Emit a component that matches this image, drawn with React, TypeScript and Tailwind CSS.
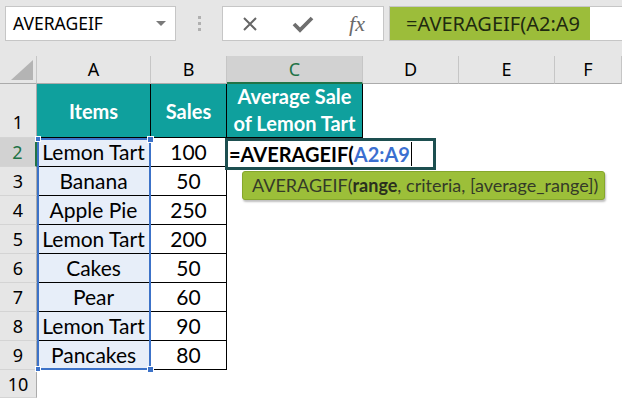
import React from "react"

const ui = { fontFamily: '"Noto Sans", "Open Sans", sans-serif' }
const cal = { fontFamily: 'Lato, "Noto Sans", sans-serif' }

const rows = [
  ["Lemon Tart", "100"],
  ["Banana", "50"],
  ["Apple Pie", "250"],
  ["Lemon Tart", "200"],
  ["Cakes", "50"],
  ["Pear", "60"],
  ["Lemon Tart", "90"],
  ["Pancakes", "80"],
]

function ColHead({ label, active }: { label: string; active?: boolean }) {
  return (
    <div
      className={
        "flex items-center justify-center border-r border-b text-[18px] " +
        (active
          ? "bg-[#d2d2d2] border-r-[#c6c6c6] border-b-2 border-b-[#217346] text-[#217346]"
          : "bg-[#e6e6e6] border-r-[#c6c6c6] border-b-[#ababab] text-black")
      }
      style={ui}
    >
      {label}
    </div>
  )
}

function RowHead({ n, active, tall }: { n: number; active?: boolean; tall?: boolean }) {
  return (
    <div
      className={
        "flex justify-center border-b border-b-[#d4d4d4] text-[18px] leading-none " +
        (tall ? "items-end pb-[6px] " : "items-center ") +
        (active
          ? "bg-[#d2d2d2] border-r-2 border-r-[#217346] text-[#217346]"
          : "bg-[#e6e6e6] border-r border-r-[#ababab] text-black")
      }
      style={ui}
    >
      {n}
    </div>
  )
}

export default function App() {
  return (
    <div className="w-[622px] h-[398px] overflow-hidden bg-white select-none">
      {/* formula bar */}
      <div className="h-[56px] bg-[#e6e6e6] flex items-start pt-[6px] pl-[5px]">
        <div
          className="w-[171px] h-[35px] bg-white border border-[#c6c6c6] flex items-center justify-between pl-[7px] pr-[9px] text-[17.5px] text-black"
          style={ui}
        >
          <span>AVERAGEIF</span>
          <svg width="10" height="6" viewBox="0 0 10 6">
            <path d="M0 0 L10 0 L5 5 Z" fill="#7a7a7a" />
          </svg>
        </div>
        <div className="w-[46px] h-[35px] flex flex-col items-center justify-center gap-[3px]">
          <span className="w-[3px] h-[3px] bg-[#b0b0b0]" />
          <span className="w-[3px] h-[3px] bg-[#b0b0b0]" />
          <span className="w-[3px] h-[3px] bg-[#b0b0b0]" />
        </div>
        <div className="w-[162px] h-[35px] bg-white border border-[#c6c6c6] flex items-center">
          <div className="w-[52px] flex justify-center pl-[2px]">
            <svg width="16" height="16" viewBox="0 0 16 16">
              <path d="M2 2 L14 14 M14 2 L2 14" stroke="#666" strokeWidth="2" />
            </svg>
          </div>
          <div className="w-[56px] flex justify-center">
            <svg width="22" height="18" viewBox="0 0 22 18">
              <path d="M2 9 L8 15 L20 3" stroke="#6e6e6e" strokeWidth="3.8" fill="none" />
            </svg>
          </div>
          <div
            className="w-[52px] flex justify-center text-[22px] italic text-[#6a6a6a] leading-none"
            style={{ fontFamily: '"Liberation Serif", "DejaVu Serif", serif' }}
          >
            fx
          </div>
        </div>
        <div className="ml-[5px] flex-1 h-[35px] bg-white border-l border-y border-[#c6c6c6] flex">
          <div
            className="w-[200px] h-full bg-[#9cbd3a] flex items-center pl-[16px] text-[20px] text-[#1f2a10]"
            style={ui}
          >
            =AVERAGEIF(A2:A9
          </div>
        </div>
      </div>

      {/* sheet */}
      <div className="relative">
        <div className="grid grid-cols-[37px_114px_76px_136px_96px_96px_1fr] grid-rows-[28px_54px_repeat(8,29px)_28px]">
          <div className="bg-[#e6e6e6] border-r border-b border-r-[#c6c6c6] border-b-[#ababab] flex items-end justify-end pr-[3px] pb-[3px]">
            <svg width="22" height="20" viewBox="0 0 22 20">
              <path d="M22 0 L22 20 L0 20 Z" fill="#b4b4b4" />
            </svg>
          </div>
          <ColHead label="A" />
          <ColHead label="B" />
          <ColHead label="C" active />
          <ColHead label="D" />
          <ColHead label="E" />
          <ColHead label="F" />

          <RowHead n={1} tall />
          <div
            className="bg-[#0fa09d] border-r border-b border-black flex items-center justify-center text-white font-bold text-[20px]"
            style={cal}
          >
            Items
          </div>
          <div
            className="bg-[#0fa09d] border-r border-b border-black flex items-center justify-center text-white font-bold text-[20px]"
            style={cal}
          >
            Sales
          </div>
          <div
            className="bg-[#0fa09d] border-r border-b border-black flex items-center justify-center text-center text-white font-bold text-[20px] leading-[27px] pb-[1px]"
            style={cal}
          >
            Average Sale
            <br />
            of Lemon Tart
          </div>
          <div />
          <div />
          <div />

          {rows.map(([item, sales], i) => (
            <React.Fragment key={i}>
              <RowHead n={i + 2} active={i === 0} />
              <div
                className="bg-[#e7eef9] border-r border-b border-black flex items-center justify-center text-[21px] text-black"
                style={cal}
              >
                {item}
              </div>
              <div
                className="border-r border-b border-black flex items-center justify-center text-[21px] text-black"
                style={cal}
              >
                {sales}
              </div>
              <div />
              <div />
              <div />
              <div />
            </React.Fragment>
          ))}

          <RowHead n={10} />
          <div />
          <div />
          <div />
          <div />
          <div />
          <div />
        </div>

        {/* selection A2:A9 */}
        <div className="absolute left-[37px] top-[82px] w-[114px] h-[232px] border-2 border-[#3c72c8] pointer-events-none" />
        <div className="absolute left-[35px] top-[80px] w-[6px] h-[6px] bg-[#3c72c8] border border-white" />
        <div className="absolute left-[147px] top-[80px] w-[7px] h-[7px] bg-[#3c72c8] border border-white" />
        <div className="absolute left-[35px] top-[310px] w-[6px] h-[6px] bg-[#3c72c8] border border-white" />
        <div className="absolute left-[147px] top-[310px] w-[7px] h-[7px] bg-[#3c72c8] border border-white" />

        {/* active cell in edit mode */}
        <div
          className="absolute left-[225px] top-[82px] w-[211px] h-[32px] bg-white border-[3px] border-[#1d4f50] flex items-center pl-[1px] text-[20px] font-bold text-black"
          style={cal}
        >
          <span>=AVERAGEIF(</span>
          <span className="text-[#3b6fd0]">A2:A9</span>
          <span className="ml-[1px] w-[1px] h-[24px] bg-black" />
        </div>

        {/* function tooltip */}
        <div
          className="absolute left-[242px] top-[115px] w-[363px] h-[29px] rounded-[3px] bg-[#9cbf39] border border-[#86a72c] shadow-[1px_2px_2px_rgba(0,0,0,0.25)] flex items-center pl-[9px] text-[18px] text-[#343a28]"
          style={cal}
        >
          AVERAGEIF(<b className="text-[#2a2f1e]">range</b>, criteria, [average_range])
        </div>
      </div>
    </div>
  )
}
